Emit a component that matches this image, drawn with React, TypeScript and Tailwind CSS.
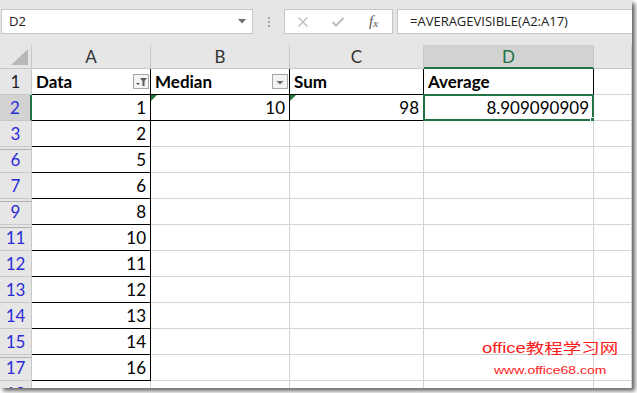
import React from "react";

type Row = { n: string; a?: string; b?: string; c?: string; d?: string; gap?: boolean };

const rows: Row[] = [
  { n: "1", a: "Data", b: "Median", c: "Sum", d: "Average" },
  { n: "2", a: "1", b: "10", c: "98", d: "8.909090909" },
  { n: "3", a: "2" },
  { n: "6", a: "5", gap: true },
  { n: "7", a: "6" },
  { n: "9", a: "8", gap: true },
  { n: "11", a: "10", gap: true },
  { n: "12", a: "11" },
  { n: "13", a: "12" },
  { n: "14", a: "13" },
  { n: "15", a: "14" },
  { n: "17", a: "16", gap: true },
  { n: "18" },
];

const cols = ["A", "B", "C", "D", ""];

function FilterButton({ filtered }: { filtered?: boolean }) {
  return (
    <div className="w-[16px] h-[15px] border border-[#a6a6a6] bg-[#f3f3f3] flex items-center justify-center shrink-0">
      {filtered ? (
        <svg width="14" height="13" viewBox="0 0 14 13">
          <polygon points="2,8 6,8 4,10" fill="#595959" />
          <polygon points="6,3 13,3 10.5,6 10.5,11 8.5,11 8.5,6" fill="#595959" />
        </svg>
      ) : (
        <svg width="14" height="13" viewBox="0 0 14 13">
          <polygon points="3.5,6 10.5,6 7,9.5" fill="#6b6b6b" />
        </svg>
      )}
    </div>
  );
}

function GreenFlag() {
  return (
    <svg className="absolute left-0 top-0" width="6" height="6" viewBox="0 0 6 6">
      <polygon points="0,0 6,0 0,6" fill="#1f7a3a" />
    </svg>
  );
}

function Cell({ row, ri, ci }: { row: Row; ri: number; ci: number }) {
  const key = ["a", "b", "c", "d", "e"][ci] as keyof Row;
  const text = (row[key] as string | undefined) ?? "";
  const header = ri === 0;

  let right = "border-r-[#d4d4d4]";
  let bottom = "border-b-[#d4d4d4]";
  if (ci === 0 && ri <= 11) {
    right = "border-r-black";
    bottom = "border-b-black";
  }
  if ((ci === 1 || ci === 2) && ri <= 1) {
    right = "border-r-black";
    bottom = "border-b-black";
  }
  if (ci === 3 && ri === 0) {
    right = "border-r-black";
    bottom = "border-b-black";
  }

  return (
    <div
      className={`relative border-r border-b ${right} ${bottom} bg-white flex items-center text-[17px] text-black ${
        header ? "justify-between pl-[4px] pr-[1px] font-bold" : "justify-end pr-[4px] pt-[1px]"
      }`}
    >
      <span className="whitespace-nowrap">{text}</span>
      {header && ci === 0 && <FilterButton filtered />}
      {header && ci === 1 && <FilterButton />}
      {ri === 1 && (ci === 1 || ci === 2) && <GreenFlag />}
      {ri === 1 && ci === 3 && (
        <div className="absolute -left-[1px] -top-[1px] right-[-1px] bottom-[-1px] border-2 border-[#217346]">
          <div className="absolute right-[-4px] bottom-[-4px] w-[6px] h-[6px] bg-[#217346] border border-white" />
        </div>
      )}
    </div>
  );
}

export default function App() {
  return (
    <div className="w-[637px] h-[393px] bg-white overflow-hidden">
      <div className="relative w-[632px] h-[388px] bg-[#e6e6e6] shadow-[3px_3px_4px_rgba(0,0,0,0.6)] flex flex-col overflow-hidden">
        {/* formula bar */}
        <div className="h-[45px] flex items-start pt-[9px] font-['Open_Sans',sans-serif] text-[13px] text-[#222] shrink-0">
          <div className="ml-[1px] w-[252px] h-[25px] bg-white border border-[#c6c6c6] flex items-center justify-between pl-[7px] pr-[6px]">
            <span>D2</span>
            <svg width="8" height="5" viewBox="0 0 8 5">
              <polygon points="0,0 8,0 4,4.5" fill="#6f6f6f" />
            </svg>
          </div>
          <div className="w-[31px] h-[25px] flex flex-col items-center justify-center gap-[2px]">
            <div className="w-[2px] h-[2px] bg-[#a8a8a8]" />
            <div className="w-[2px] h-[2px] bg-[#a8a8a8]" />
            <div className="w-[2px] h-[2px] bg-[#a8a8a8]" />
          </div>
          <div className="w-[109px] h-[25px] bg-white border border-[#c6c6c6] flex items-center">
            <div className="w-[36px] flex justify-center">
              <svg width="12" height="12" viewBox="0 0 12 12">
                <path d="M1.5 1.5 L10.5 10.5 M10.5 1.5 L1.5 10.5" stroke="#bdbdbd" strokeWidth="1.4" />
              </svg>
            </div>
            <div className="w-[34px] flex justify-center">
              <svg width="14" height="12" viewBox="0 0 14 12">
                <path d="M1.5 6 L5 9.5 L12.5 2" stroke="#bdbdbd" strokeWidth="2" fill="none" />
              </svg>
            </div>
            <div className="flex-1 flex justify-center font-['Liberation_Serif',serif] italic text-[#555] text-[15px] leading-none">
              <span>f</span>
              <span className="text-[11px] self-end">x</span>
            </div>
          </div>
          <div className="ml-[4px] flex-1 h-[25px] bg-white border border-[#c6c6c6] border-r-0 flex items-center pl-[12px]">
            =AVERAGEVISIBLE(A2:A17)
          </div>
        </div>

        {/* sheet */}
        <div className="grid grid-cols-[32px_119px_139px_134px_170px_1fr] grid-rows-[24px] auto-rows-[26px] font-['Lato',sans-serif]">
          <div className="border-r border-b border-[#c8c8c8] bg-[#e6e6e6] flex items-end justify-end pr-[3px] pb-[3px]">
            <svg width="17" height="16" viewBox="0 0 17 16">
              <polygon points="17,0 17,16 0,16" fill="#b8b8b8" />
            </svg>
          </div>
          {cols.map((c, i) =>
            i === 3 ? (
              <div
                key={i}
                className="bg-[#d2d2d2] border-r border-r-[#c8c8c8] border-b-2 border-b-[#217346] flex items-center justify-center text-[17px] text-[#217346] pt-[2px]"
              >
                {c}
              </div>
            ) : (
              <div
                key={i}
                className="bg-[#e6e6e6] border-r border-b border-[#c8c8c8] flex items-center justify-center text-[17px] text-[#333] pt-[1px]"
              >
                {c}
              </div>
            )
          )}

          {rows.map((row, ri) => (
            <React.Fragment key={ri}>
              <div
                className={`flex items-center justify-center text-[17px] pt-[1px] ${
                  ri === 1
                    ? "bg-[#d2d2d2] border-r-2 border-r-[#217346] border-b border-b-[#c8c8c8]"
                    : "bg-[#e6e6e6] border-r border-b border-[#c8c8c8]"
                } ${ri === 0 ? "text-[#222]" : "text-[#2b2bd6]"} ${
                  row.gap ? "shadow-[inset_0_2px_0_#e6e6e6,inset_0_3px_0_#b0b0b0]" : ""
                }`}
              >
                {row.n}
              </div>
              {[0, 1, 2, 3, 4].map((ci) => (
                <Cell key={ci} row={row} ri={ri} ci={ci} />
              ))}
            </React.Fragment>
          ))}
        </div>

        {/* watermark */}
        <div className="absolute left-[482px] top-[341px] font-['Liberation_Sans','Noto_Sans_CJK_SC',sans-serif] text-[#ff1a1a] leading-none">
          <div className="text-[14px] scale-x-[1.32] origin-left whitespace-nowrap">office教程学习网</div>
          <div className="mt-[10px] ml-[12px] text-[11px] scale-x-[1.27] origin-left whitespace-nowrap">www.office68.com</div>
        </div>
      </div>
    </div>
  );
}
